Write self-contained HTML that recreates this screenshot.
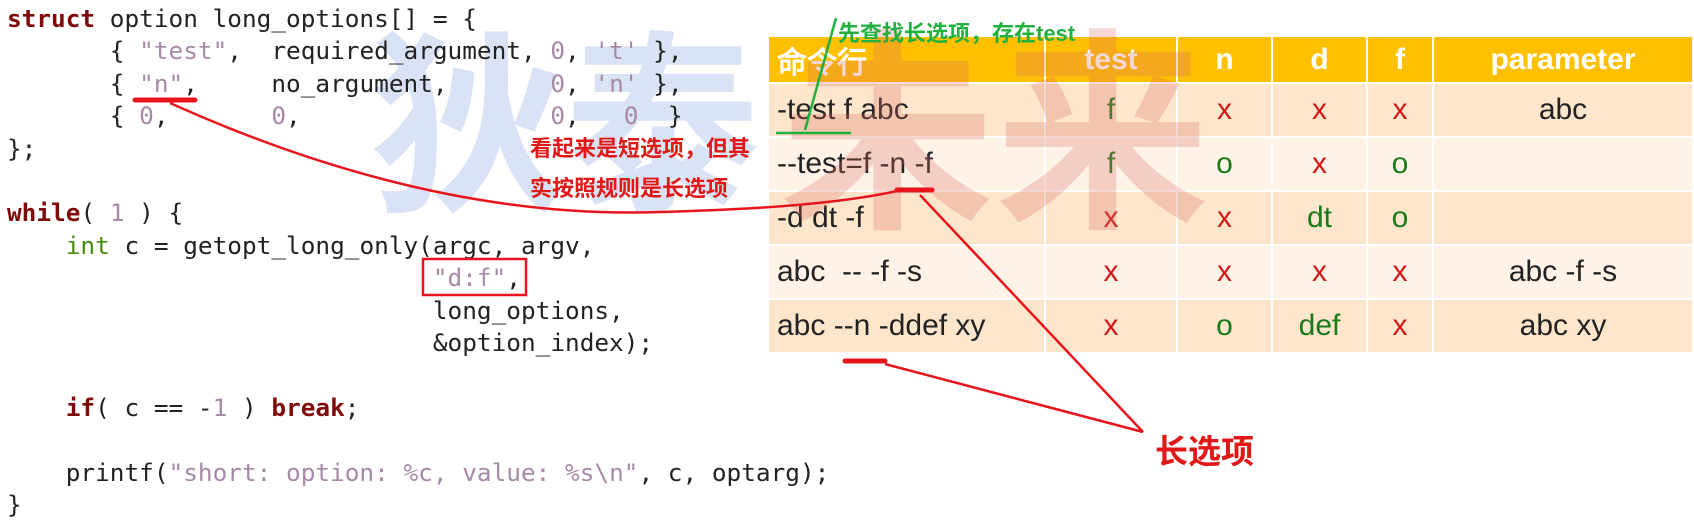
<!DOCTYPE html>
<html><head><meta charset="utf-8"><style>
html,body{margin:0;padding:0;background:#fff;width:1694px;height:522px;overflow:hidden;position:relative}
pre{position:absolute;left:7px;top:3px;margin:0;font-family:"DejaVu Sans Mono","Liberation Mono",monospace;font-size:24.4px;line-height:32.4px;color:#222}
.k{color:#7f0a0a;font-weight:bold}.g{color:#4a8a10}.s{color:#a68aa6}
table{position:absolute;left:767px;top:35px;border-collapse:collapse;font-family:"Liberation Sans",sans-serif;font-size:30px;color:#222}
td,th{padding:0;border:2px solid #fff;text-align:center}
th{background:#fec000;color:#fff;font-weight:bold;height:45px;font-size:30px}
td{height:52px}
tr.a td{background:#fde6cc}tr.b td{background:#fef3e6}
td:first-child,th:first-child{text-align:left;padding-left:8px}
.r{color:#d01818}.gr{color:#1a7a1a}
.wm{position:absolute;font-family:"Noto Sans CJK SC",sans-serif;font-weight:bold;line-height:1}
.ann{position:absolute;font-family:"Liberation Sans","Noto Sans CJK SC",sans-serif;font-weight:bold}
</style></head><body>
<div class="wm" style="left:370px;top:15px;font-size:195px;color:rgba(150,175,225,0.35)">狄泰</div>
<pre><span class="k">struct</span> option long_options[] = {
       { <span class="s">"test"</span>,  required_argument, <span class="s">0</span>, <span class="s">'t'</span> },
       { <span class="s">"n"</span>,     no_argument,       <span class="s">0</span>, <span class="s">'n'</span> },
       { <span class="s">0</span>,       <span class="s">0</span>,                 <span class="s">0</span>,   <span class="s">0</span>  }
};

<span class="k">while</span>( <span class="s">1</span> ) {
    <span class="g">int</span> c = getopt_long_only(argc, argv,
                             <span class="s">"d:f"</span>,
                             long_options,
                             &amp;option_index);

    <span class="k">if</span>( c == -<span class="s">1</span> ) <span class="k">break</span>;

    printf(<span class="s">"short: option: %c, value: %s\n"</span>, c, optarg);
}</pre>
<table>
<colgroup><col style="width:277px"><col style="width:132px"><col style="width:95px"><col style="width:95px"><col style="width:66px"><col style="width:260px"></colgroup>
<tr><th>命令行</th><th>test</th><th>n</th><th>d</th><th>f</th><th>parameter</th></tr>
<tr class="a"><td>-test f abc</td><td class="gr">f</td><td class="r">x</td><td class="r">x</td><td class="r">x</td><td>abc</td></tr>
<tr class="b"><td>--test=f -n -f</td><td class="gr">f</td><td class="gr">o</td><td class="r">x</td><td class="gr">o</td><td></td></tr>
<tr class="a"><td>-d dt -f</td><td class="r">x</td><td class="r">x</td><td class="gr">dt</td><td class="gr">o</td><td></td></tr>
<tr class="b"><td>abc&nbsp; -- -f -s</td><td class="r">x</td><td class="r">x</td><td class="r">x</td><td class="r">x</td><td>abc -f -s</td></tr>
<tr class="a"><td>abc --n -ddef xy</td><td class="r">x</td><td class="gr">o</td><td class="gr">def</td><td class="r">x</td><td>abc xy</td></tr>
</table>
<div class="wm" style="left:780px;top:10px;font-size:215px;color:rgba(220,110,100,0.28)">未来</div>
<div class="ann" style="left:530px;top:131px;font-size:22px;color:#e01818">看起来是短选项，但其</div>
<div class="ann" style="left:530px;top:171px;font-size:22px;color:#e01818">实按照规则是长选项</div>
<div class="ann" style="left:838px;top:16px;font-size:22px;color:#22b040">先查找长选项，存在test</div>
<div class="ann" style="left:1155px;top:425px;font-size:33px;color:#e01818">长选项</div>
<svg width="1694" height="522" style="position:absolute;left:0;top:0">
<g stroke="#e8141c" fill="none">
<rect x="423" y="259" width="103" height="36" stroke-width="2.5"/>
<line x1="135" y1="100" x2="195" y2="100" stroke-width="5" stroke-linecap="round"/>
<line x1="897" y1="190" x2="932" y2="190" stroke-width="5" stroke-linecap="round"/>
<line x1="845" y1="361" x2="885" y2="361" stroke-width="5" stroke-linecap="round"/>
<path d="M170 103 Q 430 220 660 212 Q 820 208 897 191" stroke-width="2.5"/>
<line x1="920" y1="195" x2="1143" y2="432" stroke-width="2.5"/>
<line x1="885" y1="364" x2="1143" y2="432" stroke-width="2.5"/>
</g>
<g stroke="#22b040" fill="none" stroke-width="2.5">
<line x1="836" y1="18" x2="805" y2="130"/>
<line x1="776" y1="133" x2="851" y2="133"/>
</g>
</svg>
</body></html>
